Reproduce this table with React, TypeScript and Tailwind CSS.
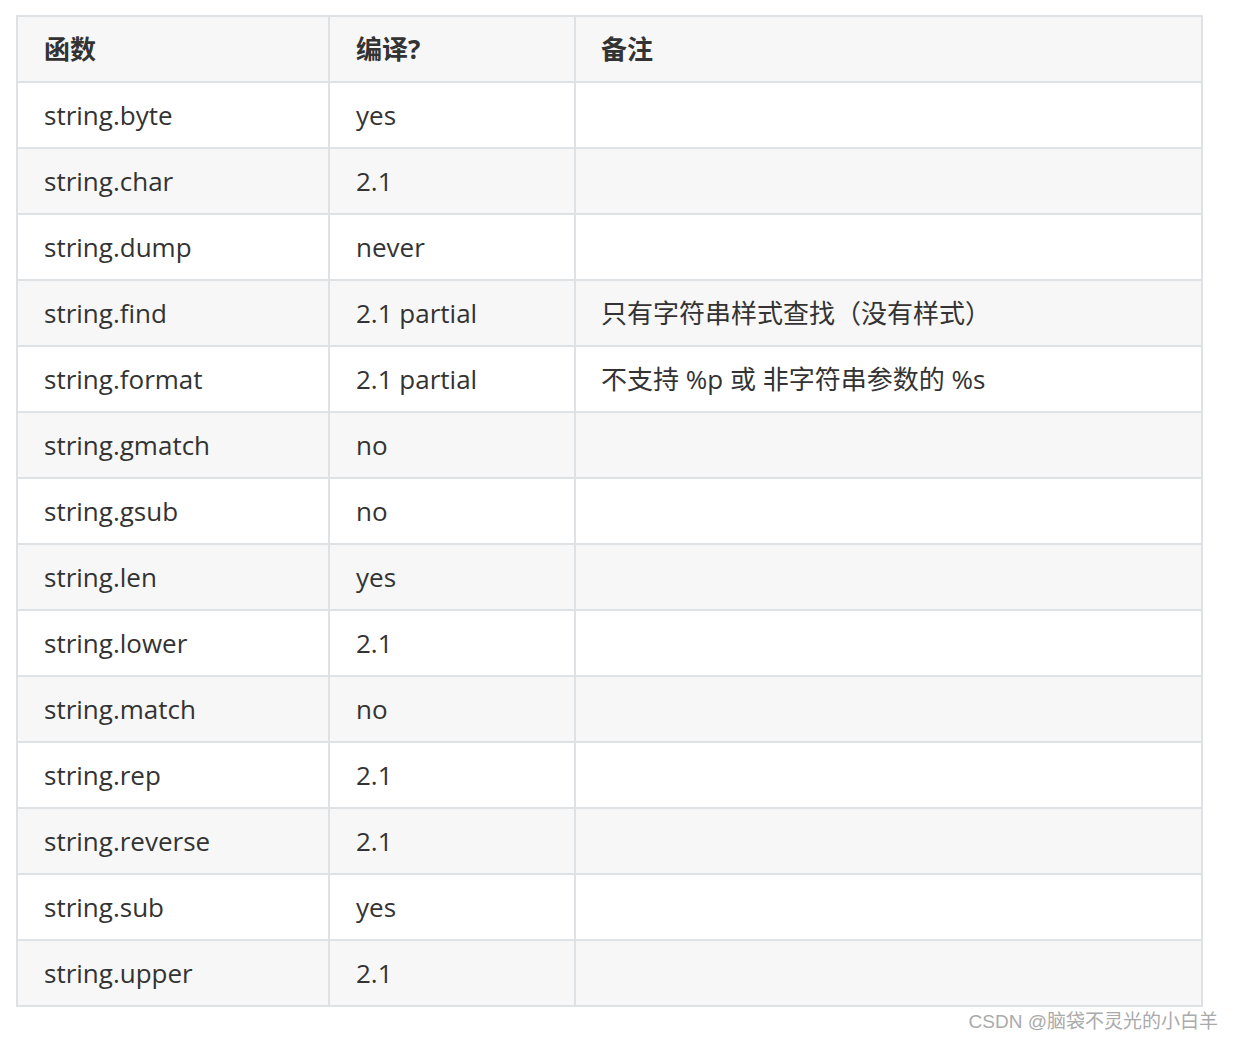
const rows: [string, string, string][] = [
  ['string.byte', 'yes', ''],
  ['string.char', '2.1', ''],
  ['string.dump', 'never', ''],
  ['string.find', '2.1 partial', '只有字符串样式查找（没有样式）'],
  ['string.format', '2.1 partial', '不支持 %p 或 非字符串参数的 %s'],
  ['string.gmatch', 'no', ''],
  ['string.gsub', 'no', ''],
  ['string.len', 'yes', ''],
  ['string.lower', '2.1', ''],
  ['string.match', 'no', ''],
  ['string.rep', '2.1', ''],
  ['string.reverse', '2.1', ''],
  ['string.sub', 'yes', ''],
  ['string.upper', '2.1', ''],
]

export default function App() {
  return (
    <div
      className="min-h-screen bg-white pl-[16px] pt-[15px] text-[#333]"
      style={{ fontFamily: '"Open Sans", "Noto Sans CJK SC", sans-serif' }}
    >
      <table className="w-[1187px] border-collapse border-2 border-[#dfe2e5] text-[26px] leading-[34px]">
        <colgroup>
          <col className="w-[312px]" />
          <col className="w-[246px]" />
          <col />
        </colgroup>
        <thead>
          <tr className="h-[66px] bg-[#f7f7f7]">
            <th className="border-2 border-[#dfe2e5] px-[26px] text-left font-bold">函数</th>
            <th className="border-2 border-[#dfe2e5] px-[26px] text-left font-bold">编译?</th>
            <th className="border-2 border-[#dfe2e5] px-[25px] text-left font-bold">备注</th>
          </tr>
        </thead>
        <tbody>
          {rows.map(([fn, comp, note], i) => (
            <tr key={fn} className={`h-[66px] ${i % 2 === 1 ? 'bg-[#f7f7f7]' : 'bg-white'}`}>
              <td className="border-2 border-[#dfe2e5] px-[26px]">{fn}</td>
              <td className="border-2 border-[#dfe2e5] px-[26px]">{comp}</td>
              <td className="border-2 border-[#dfe2e5] px-[25px]">{note}</td>
            </tr>
          ))}
        </tbody>
      </table>
      <div className="flex w-[1202px] justify-end">
        <span
          className="mt-[3px] text-[19px] leading-[24px] text-[#aaa]"
          style={{ fontFamily: '"Liberation Sans", "Noto Sans CJK SC", sans-serif' }}
        >
          CSDN @脑袋不灵光的小白羊
        </span>
      </div>
    </div>
  )
}
